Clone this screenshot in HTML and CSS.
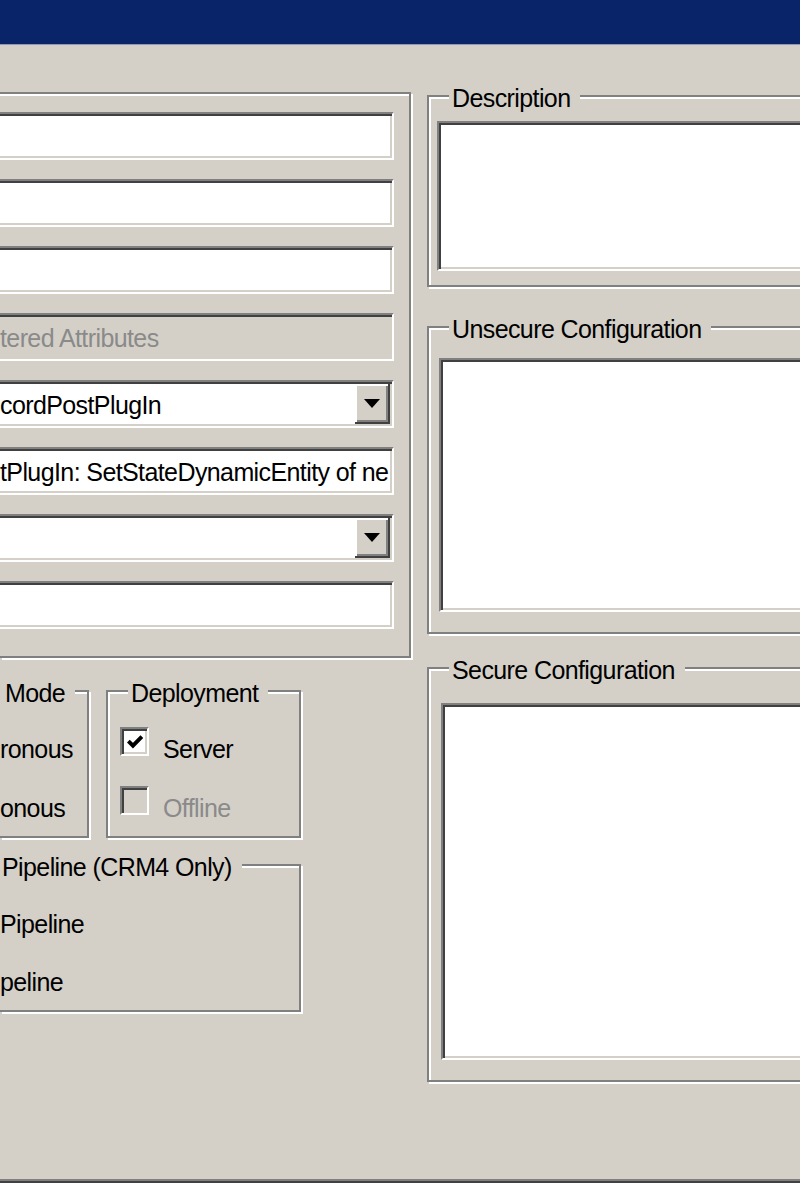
FILE: index.html
```html
<!DOCTYPE html>
<html>
<head>
    <title>Register New Step</title>
    <link rel="stylesheet" href="styles.css">
</head>
<body>
<div class="window">
    <div class="titlebar"></div>

    <div class="client">
        <div class="left-col">
            <div class="group cut main-group">
                <div class="field"></div>
                <div class="field"></div>
                <div class="field"></div>
                <div class="field disabled"><span class="value">tered Attributes</span></div>
                <div class="field combo">
                    <span class="value">cordPostPlugIn</span>
                    <div class="drop"><svg width="16" height="9" viewBox="0 0 16 9"><polygon points="0,0 16,0 8,9" fill="#000"/></svg></div>
                </div>
                <div class="field"><span class="value">tPlugIn: SetStateDynamicEntity of ne</span></div>
                <div class="field combo">
                    <span class="value"></span>
                    <div class="drop"><svg width="16" height="9" viewBox="0 0 16 9"><polygon points="0,0 16,0 8,9" fill="#000"/></svg></div>
                </div>
                <div class="field"></div>
            </div>

            <div class="option-row">
                <fieldset class="group cut mode-group">
                    <legend>Mode</legend>
                    <div class="opt"><span class="txt">ronous</span></div>
                    <div class="opt"><span class="txt">onous</span></div>
                </fieldset>
                <fieldset class="group deploy-group">
                    <legend>Deployment</legend>
                    <div class="opt">
                        <span class="check"><svg width="16" height="16" viewBox="0 0 7 7"><path d="M0.6 3.1 L2.6 5.1 L6.5 1.1" fill="none" stroke="#000" stroke-width="1.7"/></svg></span>
                        <span class="txt">Server</span>
                    </div>
                    <div class="opt off">
                        <span class="check"></span>
                        <span class="txt">Offline</span>
                    </div>
                </fieldset>
            </div>

            <fieldset class="group cut pipeline-group">
                <legend>Pipeline (CRM4 Only)</legend>
                <div class="opt"><span class="txt">Pipeline</span></div>
                <div class="opt"><span class="txt">peline</span></div>
            </fieldset>
        </div>

        <div class="right-col">
            <fieldset class="group config desc">
                <legend>Description</legend>
                <div class="memo"></div>
            </fieldset>
            <fieldset class="group config unsecure">
                <legend>Unsecure Configuration</legend>
                <div class="memo"></div>
            </fieldset>
            <fieldset class="group config secure">
                <legend>Secure Configuration</legend>
                <div class="memo"></div>
            </fieldset>
        </div>
    </div>
</div>
</body>
</html>
```

FILE: styles.css
```css
body { margin: 0; background: #fff; font-family: "Liberation Sans", Arial, sans-serif; font-size: 25px; letter-spacing: -0.6px; color: #000; overflow: hidden; }

.window { height: 1183px; box-sizing: border-box; background: #d4d0c8; border-bottom: 2px solid #404040; box-shadow: inset 0 -2px #808080; overflow: hidden; }
.titlebar { height: 44px; background: #0a246a; border-bottom: 1px solid #8e99b5; }

.client { display: flex; gap: 16px; }
.left-col { flex: none; width: 411px; padding-top: 47px; }
.right-col { flex: none; width: 600px; padding-top: 35px; }

/* etched group boxes */
.group { margin: 0; padding: 0; min-width: 0; box-sizing: border-box; border: 2px solid #808080; box-shadow: inset 2px 2px #fff, 2px 2px #fff; }
.group.cut { border-left: none; box-shadow: inset 0 2px #fff, 2px 2px #fff; }
legend { padding: 5px 10px 0 3px; margin-left: 20px; line-height: 27px; background: #d4d0c8; white-space: nowrap; }

.main-group { height: 566px; padding-top: 18px; }

/* sunken edit boxes */
.field { display: flex; align-items: center; width: 394px; height: 48px; box-sizing: border-box; margin-bottom: 19px; padding-top: 2px; background: #fff; border-top: 2px solid #808080; border-right: 2px solid #fff; border-bottom: 2px solid #fff; box-shadow: inset 0 2px #404040, inset -2px -2px #d4d0c8; overflow: hidden; white-space: nowrap; }
.field .value { flex: 1; overflow: hidden; line-height: 27px; }
.field.disabled { background: #d4d0c8; color: #8a8a8a; }
.drop { flex: none; align-self: stretch; display: flex; align-items: center; justify-content: center; width: 35px; margin: 0 2px 2px 0; box-sizing: border-box; background: #d4d0c8; border-right: 2px solid #404040; border-bottom: 2px solid #404040; box-shadow: inset 2px 2px #fff, inset -2px -2px #808080; }

.option-row { display: flex; gap: 17px; margin-top: 17px; }
.option-row .group { padding: 20px 0 19px; }
.mode-group { width: 89px; }
.mode-group legend { margin-left: 0; padding-left: 5px; }
.deploy-group { width: 195px; }
.deploy-group .opt { margin-left: 12px; }

.pipeline-group { width: 301px; margin-top: 11px; padding: 21px 0 19px; }
.pipeline-group legend { margin-left: 0; padding-left: 2px; }
.pipeline-group .opt + .opt { margin-top: 27px; }

.opt { display: flex; align-items: flex-start; height: 31px; white-space: nowrap; }
.opt + .opt { margin-top: 28px; }
.opt .txt { margin-top: 9px; line-height: 27px; }
.opt.off .txt { color: #8a8a8a; }

.check { flex: none; display: flex; align-items: center; justify-content: center; width: 29px; height: 29px; box-sizing: border-box; margin-right: 14px; background: #fff; border: 2px solid; border-color: #808080 #fff #fff #808080; box-shadow: inset 2px 2px #404040, inset -2px -2px #d4d0c8; }
.opt.off .check { background: #d4d0c8; }

/* right column memo boxes */
.memo { box-sizing: border-box; background: #fff; border: 2px solid; border-color: #808080 #fff #fff #808080; box-shadow: inset 2px 2px #404040, inset -2px -2px #d4d0c8; }
.desc { padding: 9px 0 14px; }
.desc .memo { height: 150px; margin-left: 8px; }
.unsecure { margin-top: 24px; padding: 15px 0 20px; }
.unsecure .memo { height: 254px; margin-left: 10px; }
.secure { margin-top: 18px; padding: 19px 0 20px; }
.secure .memo { height: 357px; margin-left: 12px; }
```
